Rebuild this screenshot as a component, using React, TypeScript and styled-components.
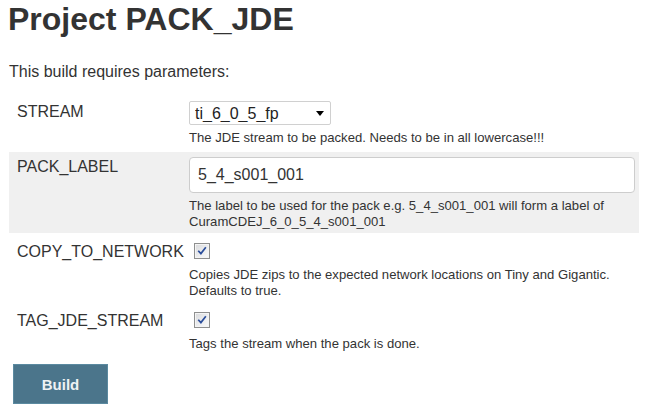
import React from "react";
import styled, { createGlobalStyle } from "styled-components";

const GlobalStyle = createGlobalStyle`
  html, body { margin: 0; padding: 0; background: #fff; }
  body { font-family: "Liberation Sans", Arial, sans-serif; color: #333; }
`;

const Page = styled.div`
  padding: 1px 8px 0 8px;
`;

const Title = styled.h1`
  margin: 0;
  font-size: 32px;
  line-height: 37px;
  font-weight: bold;
  color: #333;
`;

const Intro = styled.p`
  margin: 25px 0 0 1px;
  font-size: 16px;
  line-height: 18px;
  color: #333;
`;

const Table = styled.div`
  margin: 15px 0 0 1px;
  width: 630px;
  display: flex;
  flex-direction: column;
  gap: 3px;
`;

const Row = styled.div<{ $shaded?: boolean }>`
  display: grid;
  grid-template-columns: 180px 1fr;
  padding: 5px 0 3px 0;
  background: ${(p) => (p.$shaded ? "#f0f0f0" : "transparent")};
`;

const Label = styled.div<{ $top?: number }>`
  padding: ${(p) => p.$top ?? 2}px 0 0 8px;
  font-size: 16px;
  line-height: 18px;
  color: #333;
  white-space: nowrap;
`;

const Value = styled.div`
  display: flex;
  flex-direction: column;
  align-items: flex-start;
`;

const Description = styled.div`
  margin-top: 5px;
  font-size: 13.1px;
  line-height: 16px;
  color: #333;
`;

const SelectWrap = styled.span`
  position: relative;
  display: inline-block;
`;

const Select = styled.select`
  appearance: none;
  -webkit-appearance: none;
  width: 142px;
  height: 24px;
  margin: 0;
  padding: 0 0 0 5px;
  border: 1px solid #d0d0d0;
  border-radius: 2px;
  background: #fff;
  font-family: "Liberation Sans", Arial, sans-serif;
  font-size: 16px;
  color: #222;
  outline: none;
`;

const Arrow = styled.svg`
  position: absolute;
  right: 7px;
  top: 10px;
  pointer-events: none;
`;

const TextInput = styled.input`
  box-sizing: border-box;
  width: 446px;
  height: 36px;
  margin: 0;
  padding: 0 8px;
  border: 1px solid #cdcdcd;
  border-radius: 4px;
  background: #fff;
  font-family: "Liberation Sans", Arial, sans-serif;
  font-size: 16px;
  color: #333;
  outline: none;
`;

const CheckBox = styled.span`
  box-sizing: border-box;
  display: inline-flex;
  align-items: center;
  justify-content: center;
  width: 16px;
  height: 16px;
  margin: 2px 0 3px 5px;
  border: 1px solid #8e8f8f;
  background: linear-gradient(135deg, #d8d9db 0%, #eeeff1 60%, #f9f9f9 100%);
  box-shadow: inset 0 0 0 1px #f4f4f4;
`;

const BuildButton = styled.button`
  margin: 9px 0 0 5px;
  width: 95px;
  height: 40px;
  border: 1px solid #5b8aa0;
  background: #4b758b;
  color: #eef2f4;
  font-family: "Liberation Sans", Arial, sans-serif;
  font-size: 15px;
  font-weight: bold;
  padding: 0;
  cursor: pointer;
`;

const Check = () => (
  <svg width="10" height="10" viewBox="0 0 10 10">
    <path
      d="M1.8 5.4 L3.9 7.6 L8.3 2"
      fill="none"
      stroke="#2b4e9b"
      strokeWidth="1.7"
      strokeLinecap="square"
    />
  </svg>
);

export default function App() {
  return (
    <>
      <GlobalStyle />
      <Page>
        <Title>Project PACK_JDE</Title>
        <Intro>This build requires parameters:</Intro>
        <Table>
          <Row>
            <Label>STREAM</Label>
            <Value>
              <SelectWrap>
                <Select defaultValue="ti_6_0_5_fp">
                  <option value="ti_6_0_5_fp">ti_6_0_5_fp</option>
                </Select>
                <Arrow width="8" height="5" viewBox="0 0 8 5">
                  <path d="M0 0 H8 L4 5 Z" fill="#000" />
                </Arrow>
              </SelectWrap>
              <Description>
                The JDE stream to be packed. Needs to be in all lowercase!!!
              </Description>
            </Value>
          </Row>
          <Row $shaded>
            <Label $top={1}>PACK_LABEL</Label>
            <Value>
              <TextInput readOnly defaultValue="5_4_s001_001" />
              <Description>
                The label to be used for the pack e.g. 5_4_s001_001 will form a
                label of
                <br />
                CuramCDEJ_6_0_5_4_s001_001
              </Description>
            </Value>
          </Row>
          <Row>
            <Label>COPY_TO_NETWORK</Label>
            <Value>
              <CheckBox role="checkbox" aria-checked="true">
                <Check />
              </CheckBox>
              <Description>
                Copies JDE zips to the expected network locations on Tiny and
                Gigantic.
                <br />
                Defaults to true.
              </Description>
            </Value>
          </Row>
          <Row>
            <Label>TAG_JDE_STREAM</Label>
            <Value>
              <CheckBox role="checkbox" aria-checked="true">
                <Check />
              </CheckBox>
              <Description>Tags the stream when the pack is done.</Description>
            </Value>
          </Row>
        </Table>
        <BuildButton>Build</BuildButton>
      </Page>
    </>
  );
}
